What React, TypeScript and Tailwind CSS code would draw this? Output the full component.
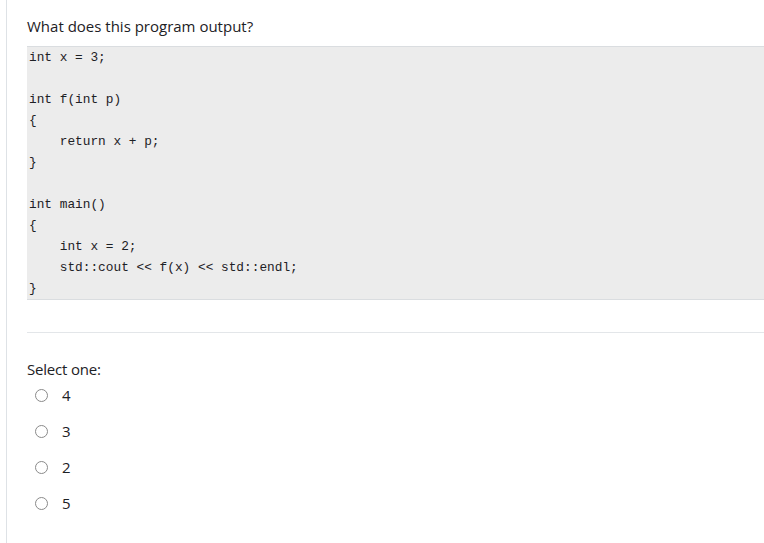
import React from "react";

const code = `int x = 3;

int f(int p)
{
    return x + p;
}

int main()
{
    int x = 2;
    std::cout << f(x) << std::endl;
}`;

export default function App() {
  const options = ["4", "3", "2", "5"];
  return (
    <div className="w-[764px] h-[543px] bg-white overflow-hidden">
      <div
        className="ml-[6px] h-full border-l border-[#dee2e6] pl-[20px] text-[#1d2125]"
        style={{ fontFamily: '"Open Sans", "Noto Sans", sans-serif' }}
      >
        <div className="pt-[15px] text-[15px] leading-[22px]">What does this program output?</div>
        <pre
          className="mt-[9px] bg-[#ececec] border-t border-b border-[#dadde0] pl-[2px] text-[12.8px] leading-[21px] text-[#1d2125]"
          style={{ fontFamily: '"Liberation Mono", "DejaVu Sans Mono", monospace' }}
        >
          {code}
        </pre>
        <div className="mt-[32px] border-t border-[#e3e6e9]" />
        <div className="mt-[25px] text-[15px] leading-[22px] tracking-[-0.2px]">Select one:</div>
        <div className="-mt-[3px] flex flex-col">
          {options.map((o) => (
            <label key={o} className="flex items-center h-[36px] pl-[8px]">
              <span className="w-[13px] h-[13px] rounded-full border border-[#8a8a8a] bg-white" />
              <span className="ml-[14px] text-[15px]">{o}</span>
            </label>
          ))}
        </div>
      </div>
    </div>
  );
}
